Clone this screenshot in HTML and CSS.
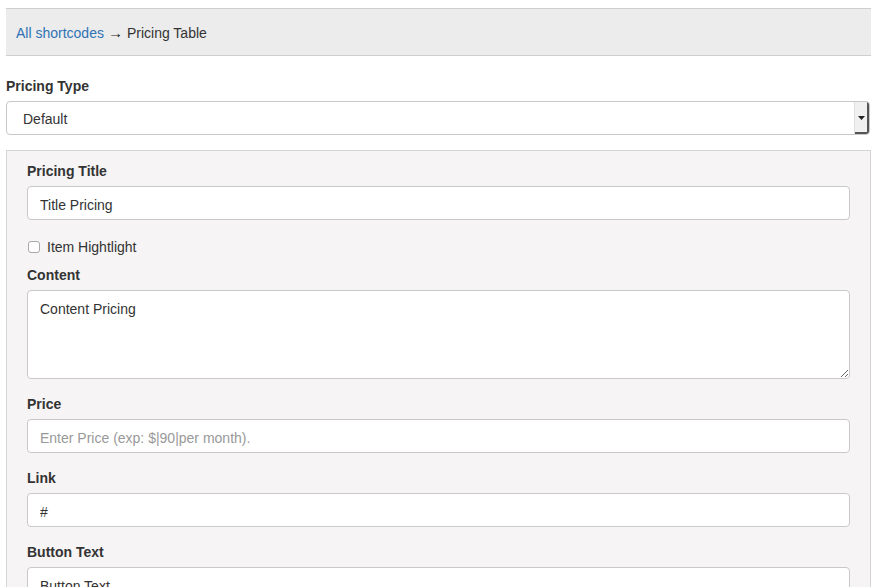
FILE: index.html
```html
<!DOCTYPE html>
<html lang="en">
<head>
<meta charset="utf-8">
<title>Pricing Table</title>
<link rel="stylesheet" href="styles.css">
</head>
<body>
<div class="crumbs"><a href="#" class="crumb-link">All shortcodes</a><span class="arrow">→</span>Pricing Table</div>

<div class="group group-type">
  <label class="lbl">Pricing Type</label>
  <div class="select-wrap">
    <select class="select"><option>Default</option></select>
    <span class="select-btn"><svg width="7" height="4" viewBox="0 0 7 4"><path d="M0 0H7L3.5 4Z" fill="#222"/></svg></span>
  </div>
</div>

<div class="panel">
  <div class="group">
    <label class="lbl">Pricing Title</label>
    <input class="field" type="text" value="Title Pricing">
  </div>
  <div class="check">
    <input type="checkbox" class="cb" id="hl"><label for="hl" class="cb-label">Item Hightlight</label>
  </div>
  <div class="group">
    <label class="lbl">Content</label>
    <textarea class="field area">Content Pricing</textarea>
  </div>
  <div class="group">
    <label class="lbl">Price</label>
    <input class="field" type="text" placeholder="Enter Price (exp: $|90|per month).">
  </div>
  <div class="group">
    <label class="lbl">Link</label>
    <input class="field" type="text" value="#">
  </div>
  <div class="group">
    <label class="lbl">Button Text</label>
    <input class="field" type="text" value="Button Text">
  </div>
</div>
</body>
</html>
```

FILE: styles.css
```css
html, body {
  background: #fff;
}
body {
  margin: 8px 7px 0 6px;
  font-family: "Liberation Sans", Arial, sans-serif;
  font-size: 14px;
  line-height: 20px;
  color: #333;
}
.crumbs {
  background: #ececec;
  border-top: 1px solid #cfcfcf;
  border-bottom: 1px solid #cfcfcf;
  display: flex;
  align-items: center;
  padding: 2px 10px 0 10px;
  box-sizing: border-box;
  height: 48px;
  color: #333;
}
.crumb-link {
  color: #2f73b5;
  text-decoration: none;
}
.arrow {
  font-size: 15px;
  margin: 0 4px 0 4px;
  color: #222;
}
.group {
  display: flex;
  flex-direction: column;
  margin-bottom: 15px;
}
.group-type {
  margin-top: 20px;
  margin-bottom: 15px;
}
.lbl {
  font-weight: bold;
  margin-bottom: 5px;
  color: #333;
}
.select-wrap {
  display: flex;
  height: 34px;
  box-sizing: border-box;
  border: 1px solid #c8c8c8;
  border-radius: 4px;
  background: #fff;
  overflow: hidden;
  margin-right: 1px;
}
.select {
  flex: 1;
  appearance: none;
  -webkit-appearance: none;
  border: none;
  background: transparent;
  font-family: inherit;
  font-size: 14px;
  color: #333;
  padding: 1px 16px 0 16px;
  outline: none;
}
.select-btn {
  width: 13px;
  background: #f0f0f0;
  border-left: 1px solid #e0e0e0;
  box-shadow: inset -2px -2px 0 #555;
  display: flex;
  align-items: center;
  justify-content: center;
  padding-right: 1px;
}
.panel {
  background: #f6f4f4;
  border: 1px solid #d4d4d4;
  padding: 10px 20px 0 20px;
  height: 450px;
  box-sizing: border-box;
}
.field {
  height: 34px;
  box-sizing: border-box;
  border: 1px solid #c9c9c9;
  border-radius: 4px;
  background: #fff;
  font-family: inherit;
  font-size: 14px;
  color: #333;
  padding: 8px 12px 4px 12px;
  outline: none;
  margin: 0;
}
.field::placeholder {
  color: #999;
}
.area {
  height: 89px;
  resize: vertical;
  padding: 8px 12px;
  line-height: 20px;
}
.check {
  display: flex;
  align-items: center;
  padding-top: 2px;
  margin-bottom: 8px;
  height: 20px;
}
.cb {
  appearance: none;
  -webkit-appearance: none;
  width: 12px;
  height: 12px;
  border: 1px solid #a9a9a9;
  border-radius: 3px;
  background: #fff;
  margin: 0 7px 0 1px;
}
.cb-label {
  color: #333;
}
```
